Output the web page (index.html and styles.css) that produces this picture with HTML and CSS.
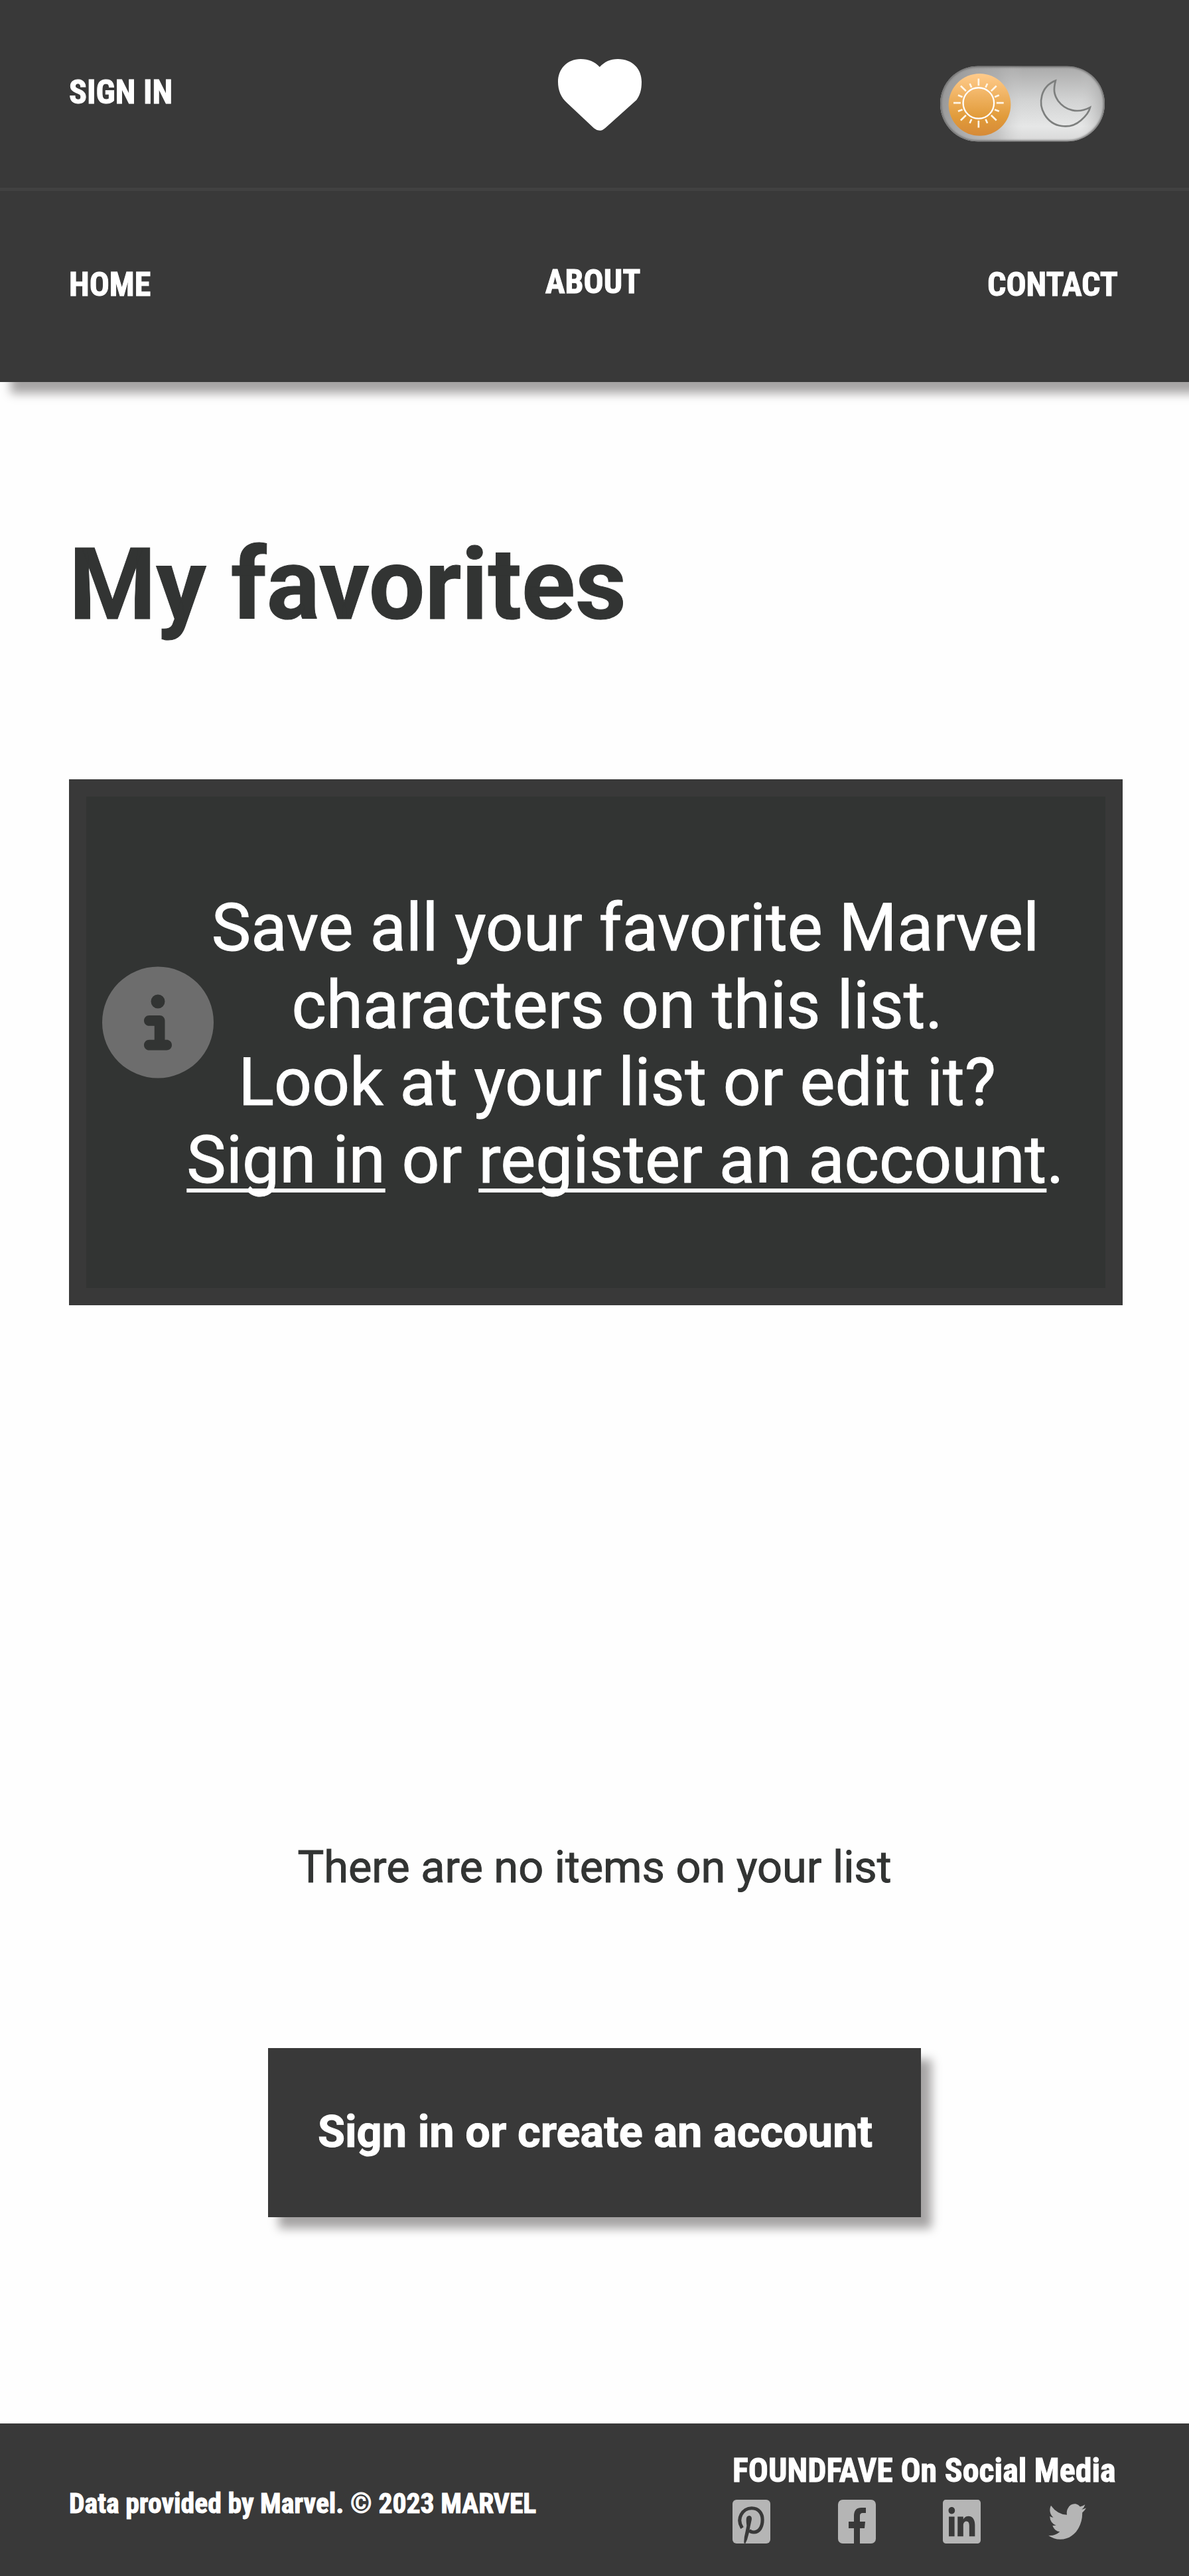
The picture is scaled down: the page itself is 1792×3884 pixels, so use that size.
FILE: index.html
```html
<!DOCTYPE html>
<html lang="en">
<head>
<meta charset="utf-8">
<title>My favorites</title>
<link rel="stylesheet" href="styles.css">
</head>
<body>
<header class="header">
  <div class="top-bar">
    <a class="nav-link sign-in">SIGN IN</a>
    <svg class="heart" viewBox="124 87 377 324" preserveAspectRatio="none"><path d="M312 123C290 99 262 87 226 87C165 87 124 132 124 190C124 230 138 262 165 286L286 400Q312 422 338 398L478 272C493 252 501 228 501 190C501 132 460 87 394 87C360 87 333 100 312 123Z" fill="#fff"/></svg>
    <svg class="toggle" viewBox="73 57 750 346">
      <defs>
        <linearGradient id="track" x1="0" y1="0" x2="0" y2="1"><stop offset="0" stop-color="#aaa"/><stop offset=".45" stop-color="#d2d3d3"/><stop offset=".8" stop-color="#e6e7e7"/><stop offset="1" stop-color="#d8d8d8"/></linearGradient>
        <linearGradient id="shade" x1="0" y1="0" x2="1" y2="0"><stop offset="0" stop-color="#8d8d8d" stop-opacity=".85"/><stop offset=".35" stop-color="#a8a8a8" stop-opacity=".5"/><stop offset=".5" stop-color="#ccc" stop-opacity="0"/><stop offset=".85" stop-color="#ccc" stop-opacity="0"/><stop offset="1" stop-color="#999" stop-opacity=".6"/></linearGradient>
        <linearGradient id="sun" x1="0" y1="0" x2="0" y2="1"><stop offset="0" stop-color="#ffcb8b"/><stop offset=".7" stop-color="#e19b3a"/><stop offset="1" stop-color="#d68a38"/></linearGradient>
        <filter id="soft"><feGaussianBlur stdDeviation="5"/></filter>
        <clipPath id="pill"><rect x="75" y="59" width="746" height="342" rx="171"/></clipPath>
      </defs>
      <rect x="75" y="59" width="746" height="342" rx="171" fill="url(#track)"/>
      <rect x="75" y="59" width="746" height="342" rx="171" fill="url(#shade)"/>
      <g clip-path="url(#pill)"><rect x="75" y="59" width="746" height="342" rx="171" fill="none" stroke="#666" stroke-width="10" filter="url(#soft)"/></g>
      <circle cx="254" cy="234" r="141" fill="url(#sun)"/>
      <g stroke="#fff5e6" stroke-width="8" fill="none">
        <circle cx="249" cy="227" r="70" stroke="#fff" stroke-width="7"/>
        <path d="M249 116v32M249 306v32M135 226h33M330 226h33M168 149l24 23M330 149l-24 23M168 305l24-23M330 305l-24-23M209 138l8 18M289 138l-8 18M209 318l8-18M289 318l-8-18M156 191l20 8M342 191l-20 8M156 264l20-8M342 264l-20-8"/>
      </g>
      <path d="M598 125C530 152 518 228 548 278C585 340 664 348 713 305C738 284 752 260 755 246C698 276 642 260 610 217C590 188 588 165 598 125Z" fill="none" stroke="#7d7f7e" stroke-width="8"/>
    </svg>
  </div>
  <nav class="nav-bar">
    <a class="nav-link">HOME</a>
    <a class="nav-link about">ABOUT</a>
    <a class="nav-link contact">CONTACT</a>
  </nav>
</header>
<main class="main">
  <h1 class="title">My favorites</h1>
  <section class="info">
    <svg class="info-icon" viewBox="0 0 512 512"><path fill="#6d6d6d" fill-rule="evenodd" d="M256 512A256 256 0 1 0 256 0a256 256 0 1 0 0 512zM216 336h24V272H216c-13.3 0-24-10.7-24-24s10.7-24 24-24h48c13.3 0 24 10.7 24 24v88h8c13.3 0 24 10.7 24 24s-10.7 24-24 24H216c-13.3 0-24-10.7-24-24s10.7-24 24-24zm40-208a32 32 0 1 1 0 64 32 32 0 1 1 0-64z"/></svg>
    <p class="info-text">Save all your favorite Marvel<br>characters on this list.&nbsp;<br>Look at your list or edit it?&nbsp;<br><a class="info-link">Sign in</a> or <a class="info-link">register an account</a>.</p>
  </section>
  <p class="empty">There are no items on your list</p>
  <button class="button">Sign in or create an account</button>
</main>
<footer class="footer">
  <p class="credit">Data provided by Marvel. © 2023 MARVEL</p>
  <div class="social">
    <p class="social-title">FOUNDFAVE On Social Media</p>
    <div class="social-icons">
      <svg class="social-icon" viewBox="27 42 168 198" preserveAspectRatio="none"><rect x="27" y="42" width="168" height="198" rx="18" fill="#b5b5b5"/><path d="M70 170C42 128 72 80 112 80C145 80 160 106 160 132C160 166 145 189 122 189C112 189 105 186 101 179" fill="none" stroke="#393939" stroke-width="15"/><path d="M88 132Q88 114 102 114Q114 116 112 132L105 165Q102 190 92 222L84 240L78 238Q77 215 84 190L90 160Q88 145 88 132Z" fill="#393939"/></svg>
      <svg class="social-icon" viewBox="501 42 171 198" preserveAspectRatio="none"><rect x="501" y="42" width="171" height="198" rx="21" fill="#b5b5b5"/><path fill="#393939" d="M573 240V171H549V141H573V112Q575 78 606 78H627V102H612Q600 103 600 114V141H624L621 171H600V240Z"/></svg>
      <svg class="social-icon" viewBox="0 0 16 16" preserveAspectRatio="none"><path fill="#b5b5b5" d="M0 1.146C0 .513.526 0 1.175 0h13.65C15.474 0 16 .513 16 1.146v13.708c0 .633-.526 1.146-1.175 1.146H1.175C.526 16 0 15.487 0 14.854V1.146zm4.943 12.248V6.169H2.542v7.225h2.401zm-1.2-8.212c.837 0 1.358-.554 1.358-1.248-.015-.709-.52-1.248-1.342-1.248-.822 0-1.359.54-1.359 1.248 0 .694.521 1.248 1.327 1.248h.016zm4.908 8.212V9.359c0-.216.016-.432.08-.586.173-.431.568-.878 1.232-.878.869 0 1.216.662 1.216 1.634v3.865h2.401V9.25c0-2.22-1.184-3.252-2.764-3.252-1.274 0-1.845.7-2.165 1.193v.025h-.016a5.54 5.54 0 0 1 .016-.025V6.169h-2.4c.03.678 0 7.225 0 7.225h2.4z"/></svg>
      <svg class="social-icon" viewBox="0 0.5 16 16" preserveAspectRatio="none"><path fill="#b5b5b5" d="M5.026 15c6.038 0 9.341-5.003 9.341-9.334 0-.14 0-.282-.006-.422A6.685 6.685 0 0 0 16 3.542a6.658 6.658 0 0 1-1.889.518 3.301 3.301 0 0 0 1.447-1.817 6.533 6.533 0 0 1-2.087.793A3.286 3.286 0 0 0 7.875 6.03a9.325 9.325 0 0 1-6.767-3.429 3.289 3.289 0 0 0 1.018 4.382A3.323 3.323 0 0 1 .64 6.575v.045a3.288 3.288 0 0 0 2.632 3.218 3.203 3.203 0 0 1-.865.115 3.23 3.23 0 0 1-.614-.057 3.283 3.283 0 0 0 3.067 2.277A6.588 6.588 0 0 1 .78 13.58a6.32 6.32 0 0 1-.78-.045A9.344 9.344 0 0 0 5.026 15z"/></svg>
    </div>
  </div>
</footer>
</body>
</html>
```
FILE: styles.css
```css
* { box-sizing: border-box; }
body { margin: 0; background: #fefefe; font-family: Roboto, sans-serif; color: #323433; overflow-x: hidden; -webkit-text-stroke: 1px; }
p, h1 { margin: 0; }
svg { display: block; }

.header { height: 576px; background: #393939; box-shadow: 16px 17px 14px #a6a4a4; }
.top-bar, .nav-bar { display: grid; grid-template-columns: 1fr auto 1fr; align-items: start; }
.top-bar { height: 288px; border-bottom: 5px solid #414141; padding: 89px 126px 0 104px; }
.nav-bar { height: 288px; padding: 112px 107px 0 104px; }
.nav-link { font: 700 50px/58px "Roboto Condensed", Roboto, sans-serif; color: #fff; }
.sign-in { margin-top: 21px; }
.about { margin-top: -4px; margin-right: 2px; }
.contact { justify-self: end; }
.heart { width: 126px; height: 108px; margin-left: 38px; }
.toggle { width: 250px; height: 115px; margin-top: 10px; justify-self: end; }

.main { height: 3078px; padding: 219px 100px 0 104px; display: flex; flex-direction: column; }
.title { font-size: 150px; line-height: 175px; font-weight: 700; }
.info { margin-top: 205px; height: 793px; border: 26px solid #393939; background: #323433; padding: 140px 24px 0; display: flex; align-items: flex-start; }
.info-icon { flex: none; width: 168px; height: 169px; margin-top: 116px; }
.info-text { flex: 1; margin-left: -79px; text-align: center; color: #fff; font-size: 100px; line-height: 116.7px; white-space: nowrap; }
.info-link { text-decoration: underline; text-decoration-thickness: 6px; text-underline-offset: 9px; text-decoration-skip-ink: none; }
.empty { margin-top: 808px; margin-right: 4px; text-align: center; font-size: 66.7px; line-height: 78px; }
.button { align-self: center; margin-top: 234px; margin-right: 4px; width: 984px; height: 255px; border: 0; padding: 0 0 4px 2px; background: #393939; color: #fff; font: 700 66.7px/78px Roboto, sans-serif; -webkit-text-stroke: 1px; box-shadow: 16px 17px 14px #a6a4a4; }

.footer { height: 230px; background: #393939; color: #fff; padding: 42px 0 0 104px; display: flex; font-family: "Roboto Condensed", Roboto, sans-serif; font-weight: 700; }
.credit { width: 1000px; margin-top: 53px; font-size: 41.7px; line-height: 51px; }
.social-title { font-size: 50px; line-height: 58px; white-space: nowrap; }
.social-icons { display: flex; gap: 101.5px; margin-top: 15px; }
.social-icon { width: 57px; height: 66px; }
```
